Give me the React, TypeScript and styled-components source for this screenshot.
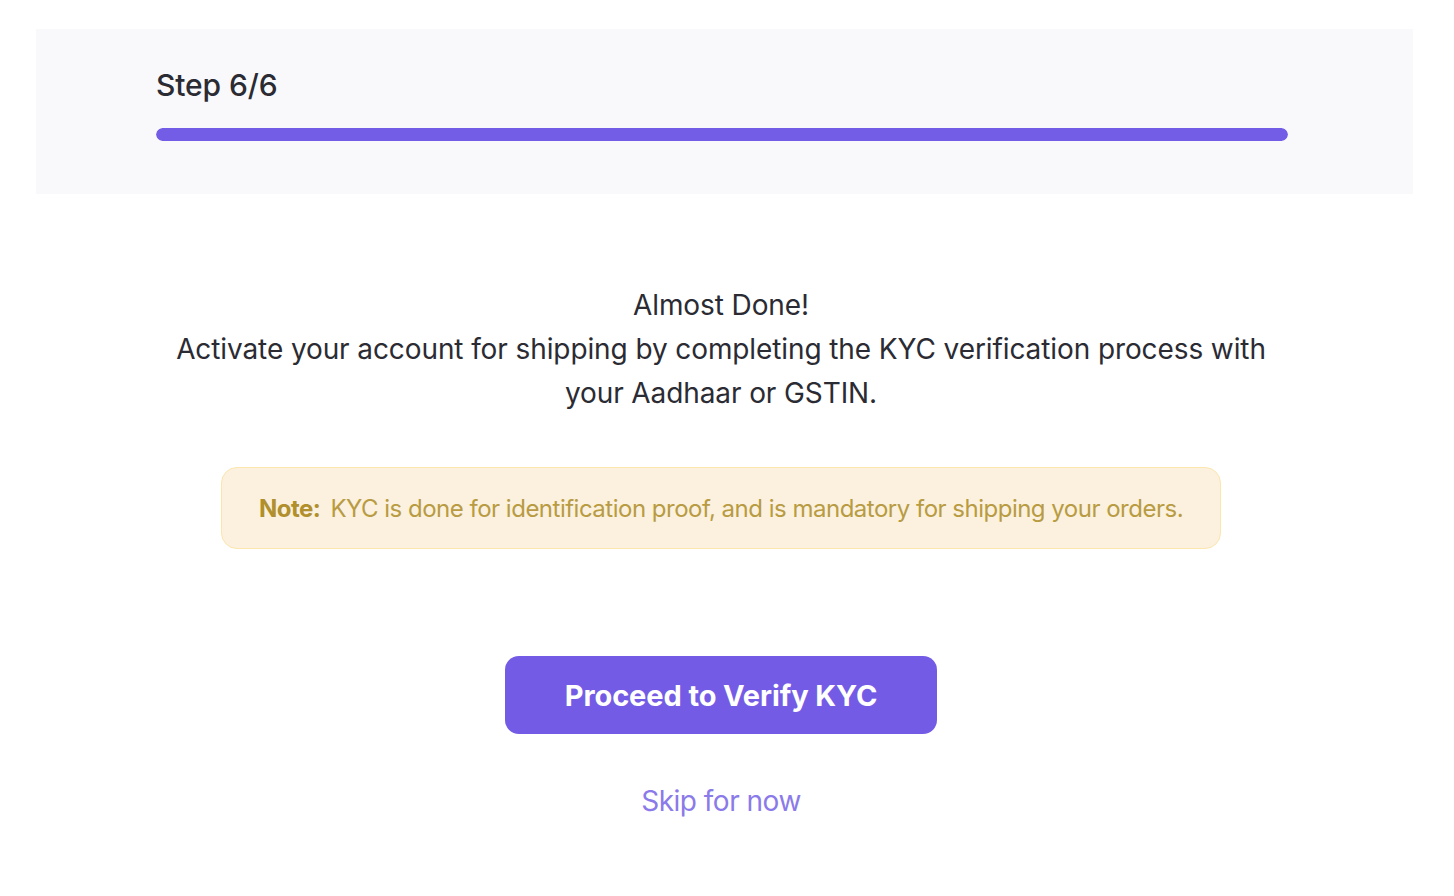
import React from "react";
import styled, { createGlobalStyle } from "styled-components";

const GlobalStyle = createGlobalStyle`
	* {
		box-sizing: border-box;
	}
	body {
		margin: 0;
		background: #ffffff;
		font-family: Inter, "Noto Sans", sans-serif;
	}
`;

export default function App() {
	return (
		<>
			<GlobalStyle />
			<Page>
				<StepHeader>
					<StepLabel>Step 6/6</StepLabel>
					<ProgressTrack>
						<ProgressFill style={{ width: `${(6 / 6) * 100}%` }} />
					</ProgressTrack>
				</StepHeader>

				<Body>
					<Message>
						Almost Done!
						<br />
						Activate your account for shipping by completing the KYC verification process with
						<br />
						your Aadhaar or GSTIN.
					</Message>

					<NoteBox>
						<NoteTag>Note:</NoteTag>
						KYC is done for identification proof, and is mandatory for shipping your orders.
					</NoteBox>

					<ProceedButton>Proceed to Verify KYC</ProceedButton>
					<SkipLink>Skip for now</SkipLink>
				</Body>
			</Page>
		</>
	);
}

const Page = styled.div`
	width: 1454px;
	min-height: 896px;
	padding: 29px 41px 0 36px;
`;

const StepHeader = styled.div`
	background: #f9f9fb;
	height: 165px;
	padding: 38px 125px 0 120px;
	display: flex;
	flex-direction: column;
`;

const StepLabel = styled.div`
	font-size: 30px;
	font-weight: 500;
	color: #2b2b33;
	line-height: 36px;
	letter-spacing: -0.1px;
`;

const ProgressTrack = styled.div`
	margin-top: 25px;
	height: 13px;
	border-radius: 7px;
	background: #e6e3f7;
	overflow: hidden;
`;

const ProgressFill = styled.div`
	height: 100%;
	border-radius: 7px;
	background: #745de6;
`;

const Body = styled.div`
	display: flex;
	flex-direction: column;
	align-items: center;
	padding-top: 89px;
	padding-right: 7px;
`;

const Message = styled.p`
	margin: 0;
	text-align: center;
	font-size: 28px;
	line-height: 44px;
	color: #2b2b33;
	letter-spacing: -0.1px;
`;

const NoteBox = styled.div`
	margin-top: 52px;
	width: 1000px;
	height: 82px;
	border-radius: 16px;
	background: #fbf1de;
	border: 1.5px solid #fbe6ae;
	display: flex;
	align-items: center;
	padding-left: 37px;
	font-size: 24px;
	color: #b89b42;
	letter-spacing: -0.5px;
`;

const NoteTag = styled.span`
	font-weight: 700;
	color: #b08f2c;
	margin-right: 10px;
`;

const ProceedButton = styled.button`
	margin-top: 107px;
	width: 432px;
	height: 78px;
	border: none;
	border-radius: 14px;
	background: #745be6;
	color: #ffffff;
	font-family: Inter, "Noto Sans", sans-serif;
	font-size: 29px;
	font-weight: 700;
	letter-spacing: -0.1px;
	cursor: pointer;
`;

const SkipLink = styled.a`
	margin-top: 50px;
	font-size: 28px;
	color: #8b7ae9;
	letter-spacing: -0.5px;
	cursor: pointer;
`;
